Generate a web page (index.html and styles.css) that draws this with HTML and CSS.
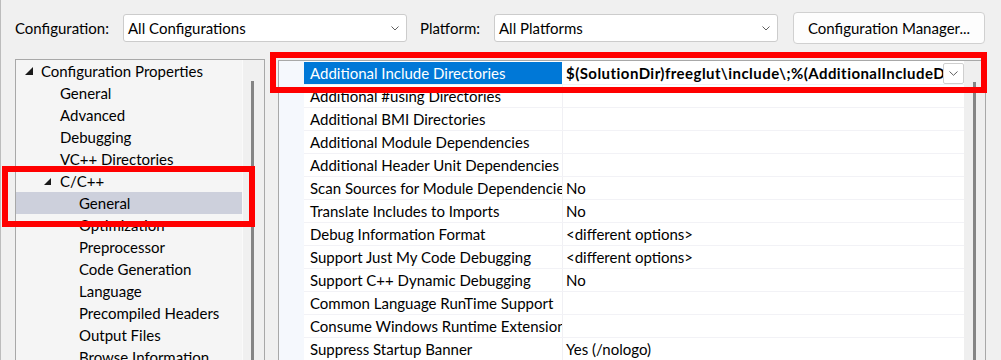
FILE: index.html
```html
<!DOCTYPE html>
<html lang="en">
<head>
    <meta charset="UTF-8">
    <meta name="viewport" content="width=device-width, initial-scale=1.0">
    <title>Property Pages</title>
    <link rel="stylesheet" href="styles.css">
</head>
<body>
    <div class="dialog">
        <div class="toolbar">
            <span class="label label-config">Configuration:</span>
            <div class="combo">
                <span>All Configurations</span>
                <svg class="chevron" width="8" height="5" viewBox="0 0 8 5"><path d="M0.5 0.5 L4 4 L7.5 0.5" fill="none" stroke="#606060" stroke-width="1"/></svg>
            </div>
            <span class="label label-platform">Platform:</span>
            <div class="combo">
                <span>All Platforms</span>
                <svg class="chevron" width="8" height="5" viewBox="0 0 8 5"><path d="M0.5 0.5 L4 4 L7.5 0.5" fill="none" stroke="#606060" stroke-width="1"/></svg>
            </div>
            <button class="btn">Configuration Manager...</button>
        </div>

        <div class="panes">
            <!-- category tree -->
            <div class="tree-pane">
                <ul class="tree">
                    <li class="lvl0"><svg class="expander" width="8" height="8" viewBox="0 0 8 8"><polygon points="8,0 8,8 0,8" fill="#1a1a1a"/></svg>Configuration Properties</li>
                    <li class="lvl1">General</li>
                    <li class="lvl1">Advanced</li>
                    <li class="lvl1">Debugging</li>
                    <li class="lvl1">VC++ Directories</li>
                    <li class="lvl1 open"><svg class="expander small" width="7" height="7" viewBox="0 0 7 7"><polygon points="7,0 7,7 0,7" fill="#1a1a1a"/></svg>C/C++</li>
                    <li class="lvl2 selected">General</li>
                    <li class="lvl2">Optimization</li>
                    <li class="lvl2">Preprocessor</li>
                    <li class="lvl2">Code Generation</li>
                    <li class="lvl2">Language</li>
                    <li class="lvl2">Precompiled Headers</li>
                    <li class="lvl2">Output Files</li>
                    <li class="lvl2">Browse Information</li>
                    <li class="lvl2">Advanced</li>
                </ul>
                <div class="vscroll"><div class="thumb"></div></div>
            </div>

            <!-- property grid -->
            <div class="grid-pane">
                <div class="gutter"></div>
                <div class="grid">
                    <div class="row">
                        <div class="name selected">Additional Include Directories</div>
                        <div class="value edit">
                            <span class="value-text">$(SolutionDir)freeglut\include\;%(AdditionalIncludeDirectories)</span>
                            <span class="drop"><svg width="9" height="5" viewBox="0 0 9 5"><path d="M0.5 0.5 L4.5 4.3 L8.5 0.5" fill="none" stroke="#606060" stroke-width="1"/></svg></span>
                        </div>
                    </div>
                    <div class="row"><div class="name">Additional #using Directories</div><div class="value"></div></div>
                    <div class="row"><div class="name">Additional BMI Directories</div><div class="value"></div></div>
                    <div class="row"><div class="name">Additional Module Dependencies</div><div class="value"></div></div>
                    <div class="row"><div class="name">Additional Header Unit Dependencies</div><div class="value"></div></div>
                    <div class="row"><div class="name">Scan Sources for Module Dependencies</div><div class="value">No</div></div>
                    <div class="row"><div class="name">Translate Includes to Imports</div><div class="value">No</div></div>
                    <div class="row"><div class="name">Debug Information Format</div><div class="value">&lt;different options&gt;</div></div>
                    <div class="row"><div class="name">Support Just My Code Debugging</div><div class="value">&lt;different options&gt;</div></div>
                    <div class="row"><div class="name">Support C++ Dynamic Debugging</div><div class="value">No</div></div>
                    <div class="row"><div class="name">Common Language RunTime Support</div><div class="value"></div></div>
                    <div class="row"><div class="name">Consume Windows Runtime Extension</div><div class="value"></div></div>
                    <div class="row"><div class="name">Suppress Startup Banner</div><div class="value">Yes (/nologo)</div></div>
                    <div class="row"><div class="name">Warning Level</div><div class="value">Level3 (/W3)</div></div>
                </div>
                <div class="vscroll grid-scroll"><div class="thumb"></div></div>
            </div>
        </div>

        <!-- annotation boxes -->
        <div class="mark mark-grid"></div>
        <div class="mark mark-tree"></div>
    </div>
</body>
</html>
```

FILE: styles.css
```css
body {
    margin: 0;
    background: #f0f0f0;
    font-family: Lato, "Noto Sans", sans-serif;
    font-size: 15px;
    color: #000;
    overflow: hidden;
}
.dialog {
    position: relative;
    height: 360px;
    overflow: hidden;
    box-shadow: inset 1px 0 #bcbcbc;
}

/* top bar */
.toolbar {
    display: flex;
    align-items: center;
    height: 32px;
    padding: 12px 0 0 15px;
}
.label-config {
    width: 108px;
}
.label-platform {
    width: 74px;
    margin-left: 13px;
}
.combo {
    box-sizing: border-box;
    width: 284px;
    height: 28px;
    display: flex;
    align-items: center;
    justify-content: space-between;
    padding: 0 7px 0 4px;
    background: #fff;
    border: 1px solid #cccccc;
    border-radius: 3px;
}
.btn {
    box-sizing: border-box;
    width: 192px;
    height: 32px;
    margin-left: 15px;
    padding: 0;
    background: #fdfdfd;
    border: 1px solid #d0d0d0;
    border-radius: 4px;
    font: inherit;
    color: inherit;
}

/* panes */
.panes {
    display: flex;
    align-items: flex-start;
    margin-top: 15px;
    padding-left: 15px;
}
.tree-pane {
    box-sizing: border-box;
    display: flex;
    width: 250px;
    height: 320px;
    border: 1px solid #a8a8a8;
    background: #f5f5f5;
}
.tree {
    flex: 1;
    list-style: none;
    margin: 0;
    padding: 0;
}
.tree li {
    display: flex;
    align-items: center;
    height: 22px;
    white-space: nowrap;
}
.tree .lvl0 {
    padding-left: 9px;
}
.tree .lvl1 {
    padding-left: 44px;
}
.tree .lvl1.open {
    padding-left: 28px;
}
.tree .lvl2 {
    padding-left: 63px;
}
.tree .selected {
    background: #cdd0dc;
}
.expander {
    margin-right: 8px;
}
.expander.small {
    margin-right: 9px;
}

.vscroll {
    box-sizing: border-box;
    width: 22px;
    align-self: stretch;
    padding: 21px 0 0 8px;
    background: #f0f0f0;
    border-left: 1px solid #fafafa;
}
.thumb {
    width: 3px;
    height: 400px;
    background: #858585;
}

.grid-pane {
    box-sizing: border-box;
    display: flex;
    width: 708px;
    height: 320px;
    margin: 1px 0 0 13px;
    border: 1px solid #a8a8a8;
    background: #fff;
}
.gutter {
    width: 25px;
    background: #f5f8fd;
}
.grid {
    width: 660px;
    padding-top: 1px;
}
.row {
    display: flex;
    height: 23px;
    box-sizing: border-box;
    border-bottom: 1px solid #f2f2f6;
}
.name {
    box-sizing: border-box;
    width: 259px;
    padding-left: 6px;
    line-height: 22px;
    white-space: nowrap;
    overflow: hidden;
    border-right: 1px solid #f0f0f4;
}
.name.selected {
    background: #0078d7;
    color: #fff;
    border-right-color: #fff;
}
.value {
    flex: 1;
    min-width: 0;
    padding-left: 3px;
    line-height: 22px;
    white-space: nowrap;
    overflow: hidden;
}
.value.edit {
    display: flex;
    align-items: flex-start;
}
.value-text {
    flex: 1;
    overflow: hidden;
    font-weight: bold;
    letter-spacing: 0.45px;
}
.drop {
    box-sizing: border-box;
    display: flex;
    align-items: center;
    justify-content: center;
    width: 21px;
    height: 21px;
    margin-top: 1px;
    background: #fff;
    border: 1px solid #cfcfcf;
    border-radius: 2px;
}
.grid-scroll {
    width: 21px;
    padding-left: 9px;
    border-left: none;
    background: #efefef;
}

/* red annotation boxes */
.mark {
    position: absolute;
    box-sizing: border-box;
    border: 6px solid #ff0000;
}
.mark-grid {
    left: 270px;
    top: 52px;
    width: 717px;
    height: 41px;
}
.mark-tree {
    left: 2px;
    top: 166px;
    width: 253px;
    height: 61px;
}
```
